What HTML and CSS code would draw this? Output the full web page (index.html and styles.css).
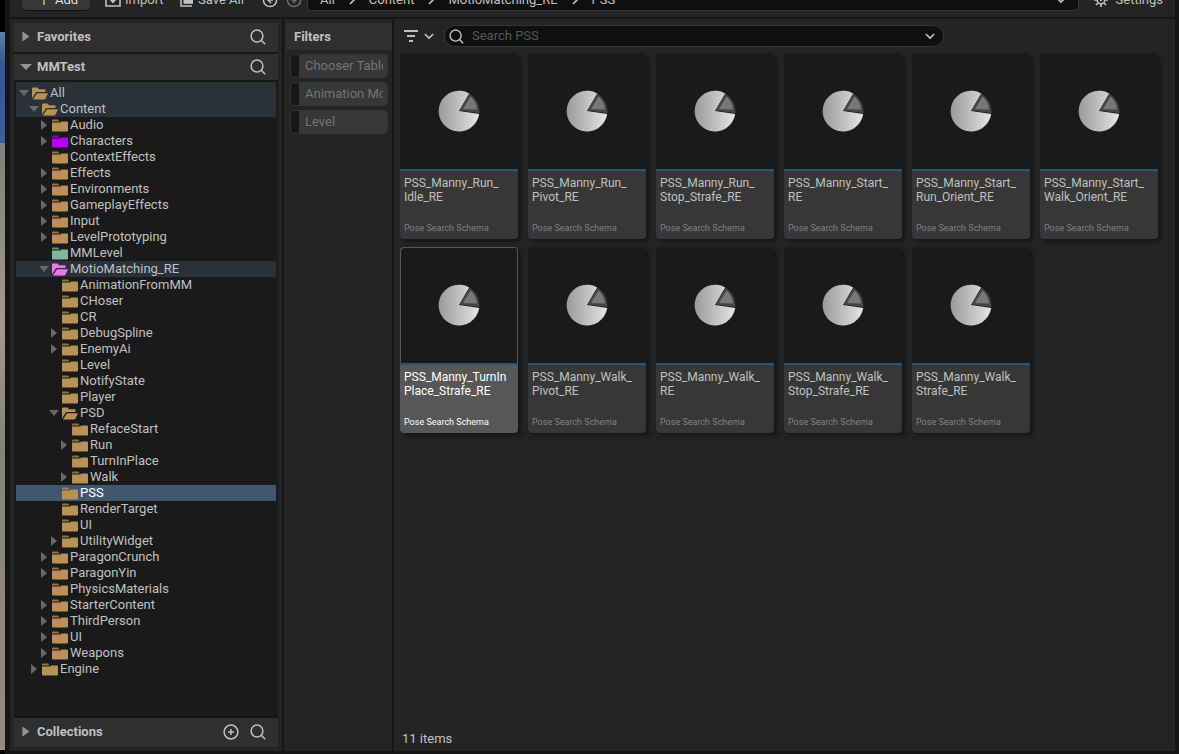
FILE: index.html
```html
<!DOCTYPE html>
<html lang="en">
<head>
<meta charset="utf-8">
<title>Content Browser</title>
<link rel="stylesheet" href="styles.css">
</head>
<body>
<svg class="defs" aria-hidden="true">
  <defs>
    <linearGradient id="pieFill" x1="0" y1="0" x2="1" y2="0"><stop offset="0" stop-color="#9a9a9a"/><stop offset="1" stop-color="#e6e6e6"/></linearGradient>
    <symbol id="folder" viewBox="0 0 16 13"><path d="M0 2.600V1.200Q0 .5 .8 .5H6l1.800 2.100z" opacity=".75"/><path d="M0 3.600H8.200L9.400 2.600H15Q16 2.600 16 3.600V11.500Q16 12.500 15 12.500H1Q0 12.500 0 11.500z"/></symbol>
    <symbol id="folder-open" viewBox="0 0 16 13"><path d="M0 11.500V1.500Q0 .5 1 .5H5.500L7 2.300H12.500Q13.500 2.300 13.500 3.300V5H5.200Q4 5 3.400 6z"/><path d="M1 12.500 4.600 6.800Q5 6.200 5.800 6.200H16L13.400 11.700Q13 12.500 12 12.500z"/></symbol>
    <symbol id="search" viewBox="0 0 16 16"><circle cx="7" cy="7" r="5.900" fill="none" stroke="currentColor" stroke-width="1.500"/><path d="M11.200 11.200 15.200 15.200" stroke="currentColor" stroke-width="1.600"/></symbol>
    <symbol id="right" viewBox="0 0 8 12"><path d="M2 2 6 6 2 10" fill="none" stroke="currentColor" stroke-width="1.700"/></symbol>
    <symbol id="down" viewBox="0 0 10 8"><path d="M.8 2 5 6 9.200 2" fill="none" stroke="currentColor" stroke-width="1.700"/></symbol>
    <symbol id="pie" viewBox="0 0 42 42"><path d="M21 21 31.200 3.400A20.400 20.400 0 1 0 41.200 24z" fill="url(#pieFill)"/><path d="M21.500 20.500 31.500 3.700A20.400 20.400 0 0 1 41.300 23.300z" fill="#454545"/><path d="M25 19 32.500 6.500A17.500 17.500 0 0 1 39 19.800z" fill="#777"/></symbol>
  </defs>
</svg>
<div class="app">
  <div class="scene"><div class="scene-sky"></div><div class="scene-wall"></div></div>
  <div class="window">
    <header class="toolbar">
      <button class="tool add"><svg width="10" height="14" viewBox="0 0 10 14"><path d="M5 0V12M0 5H10" stroke="#8bc24a" stroke-width="1.800"/></svg>Add</button>
      <button class="tool import"><svg width="16" height="14" viewBox="0 0 16 14"><path d="M4 1H1V13H15V1H12" fill="none" stroke="currentColor" stroke-width="1.600"/><path d="M4 6H12L8 10.500zM7 1H9V7H7z" fill="currentColor"/></svg>Import</button>
      <button class="tool save"><svg width="14" height="14" viewBox="0 0 14 14"><path d="M1 3V13H12" fill="none" stroke="currentColor" stroke-width="1.600"/><path d="M3.500 1H13V10.800H3.500z" fill="currentColor"/></svg>Save All</button>
      <button class="tool nav" aria-label="Back"><svg width="16" height="16" viewBox="0 0 16 16" fill="none" stroke="currentColor" stroke-width="1.500"><circle cx="8" cy="8" r="6.600"/><path d="M9 5 6 8 9 11M6 8H11"/></svg></button>
      <button class="tool nav dim" aria-label="Forward"><svg width="16" height="16" viewBox="0 0 16 16" fill="none" stroke="currentColor" stroke-width="1.500"><circle cx="8" cy="8" r="6.600"/><path d="M7 5 10 8 7 11M5 8H10"/></svg></button>
      <nav class="path" aria-label="Path">
        <a href="#">All</a><svg class="sep"><use href="#right"/></svg>
        <a href="#">Content</a><svg class="sep"><use href="#right"/></svg>
        <a href="#">MotioMatching_RE</a><svg class="sep"><use href="#right"/></svg>
        <a href="#">PSS</a><svg class="chev end"><use href="#down"/></svg>
      </nav>
      <button class="tool settings"><svg width="14" height="14" viewBox="0 0 14 14"><circle cx="7" cy="7" r="3.800" fill="none" stroke="currentColor" stroke-width="1.600"/><circle cx="7" cy="7" r="1.200" fill="currentColor"/><path d="M7 0V3M7 11V14M0 7H3M11 7H14M2 2 4 4M10 10 12 12M12 2 10 4M4 10 2 12" stroke="currentColor" stroke-width="1.700"/></svg>Settings</button>
    </header>
    <main class="main">
      <aside class="sources">
        <div class="section fav"><span class="tri"></span><h2>Favorites</h2><button class="icon" aria-label="Search favorites"><svg><use href="#search"/></svg></button></div>
        <div class="section project"><span class="tri open"></span><h2>MMTest</h2><button class="icon" aria-label="Search folders"><svg><use href="#search"/></svg></button></div>
        <ul class="tree" role="tree">
          <li role="treeitem" class="row d0 path-row first"><span class="tri open"></span><svg><use href="#folder-open"/></svg>All</li>
          <li role="treeitem" class="row d1 path-row"><span class="tri open"></span><svg><use href="#folder-open"/></svg>Content</li>
          <li role="treeitem" class="row d2"><span class="tri"></span><svg><use href="#folder"/></svg>Audio</li>
          <li role="treeitem" class="row d2 purple"><span class="tri"></span><svg><use href="#folder"/></svg>Characters</li>
          <li role="treeitem" class="row d2 leaf"><svg><use href="#folder"/></svg>ContextEffects</li>
          <li role="treeitem" class="row d2"><span class="tri"></span><svg><use href="#folder"/></svg>Effects</li>
          <li role="treeitem" class="row d2"><span class="tri"></span><svg><use href="#folder"/></svg>Environments</li>
          <li role="treeitem" class="row d2"><span class="tri"></span><svg><use href="#folder"/></svg>GameplayEffects</li>
          <li role="treeitem" class="row d2"><span class="tri"></span><svg><use href="#folder"/></svg>Input</li>
          <li role="treeitem" class="row d2"><span class="tri"></span><svg><use href="#folder"/></svg>LevelPrototyping</li>
          <li role="treeitem" class="row d2 leaf green"><svg><use href="#folder"/></svg>MMLevel</li>
          <li role="treeitem" class="row d2 path-row pink"><span class="tri open"></span><svg><use href="#folder-open"/></svg>MotioMatching_RE</li>
          <li role="treeitem" class="row d3 leaf"><svg><use href="#folder"/></svg>AnimationFromMM</li>
          <li role="treeitem" class="row d3 leaf"><svg><use href="#folder"/></svg>CHoser</li>
          <li role="treeitem" class="row d3 leaf"><svg><use href="#folder"/></svg>CR</li>
          <li role="treeitem" class="row d3"><span class="tri"></span><svg><use href="#folder"/></svg>DebugSpline</li>
          <li role="treeitem" class="row d3"><span class="tri"></span><svg><use href="#folder"/></svg>EnemyAi</li>
          <li role="treeitem" class="row d3 leaf"><svg><use href="#folder"/></svg>Level</li>
          <li role="treeitem" class="row d3 leaf"><svg><use href="#folder"/></svg>NotifyState</li>
          <li role="treeitem" class="row d3 leaf"><svg><use href="#folder"/></svg>Player</li>
          <li role="treeitem" class="row d3"><span class="tri open"></span><svg><use href="#folder-open"/></svg>PSD</li>
          <li role="treeitem" class="row d4 leaf"><svg><use href="#folder"/></svg>RefaceStart</li>
          <li role="treeitem" class="row d4"><span class="tri"></span><svg><use href="#folder"/></svg>Run</li>
          <li role="treeitem" class="row d4 leaf"><svg><use href="#folder"/></svg>TurnInPlace</li>
          <li role="treeitem" class="row d4"><span class="tri"></span><svg><use href="#folder"/></svg>Walk</li>
          <li role="treeitem" class="row d3 leaf selected" aria-selected="true"><svg><use href="#folder"/></svg>PSS</li>
          <li role="treeitem" class="row d3 leaf"><svg><use href="#folder"/></svg>RenderTarget</li>
          <li role="treeitem" class="row d3 leaf"><svg><use href="#folder"/></svg>UI</li>
          <li role="treeitem" class="row d3"><span class="tri"></span><svg><use href="#folder"/></svg>UtilityWidget</li>
          <li role="treeitem" class="row d2"><span class="tri"></span><svg><use href="#folder"/></svg>ParagonCrunch</li>
          <li role="treeitem" class="row d2"><span class="tri"></span><svg><use href="#folder"/></svg>ParagonYin</li>
          <li role="treeitem" class="row d2 leaf"><svg><use href="#folder"/></svg>PhysicsMaterials</li>
          <li role="treeitem" class="row d2"><span class="tri"></span><svg><use href="#folder"/></svg>StarterContent</li>
          <li role="treeitem" class="row d2"><span class="tri"></span><svg><use href="#folder"/></svg>ThirdPerson</li>
          <li role="treeitem" class="row d2"><span class="tri"></span><svg><use href="#folder"/></svg>UI</li>
          <li role="treeitem" class="row d2"><span class="tri"></span><svg><use href="#folder"/></svg>Weapons</li>
          <li role="treeitem" class="row d1"><span class="tri"></span><svg><use href="#folder"/></svg>Engine</li>
        </ul>
        <div class="section collections"><span class="tri"></span><h2>Collections</h2><button class="icon" aria-label="Add collection"><svg viewBox="0 0 16 16" fill="none" stroke="currentColor" stroke-width="1.500"><circle cx="8" cy="8" r="6.900"/><path d="M8 5V11M5 8H11"/></svg></button><button class="icon" aria-label="Search collections"><svg><use href="#search"/></svg></button></div>
      </aside>
      <aside class="filters">
        <h2>Filters</h2>
        <button class="chip"><span>Chooser Table</span></button>
        <button class="chip"><span>Animation Montage</span></button>
        <button class="chip"><span>Level</span></button>
      </aside>
      <section class="assets">
        <div class="searchbar">
          <button class="filter-btn" aria-label="Filter"><svg width="16" height="14" viewBox="0 0 16 14"><path d="M1 2H15M4 7H12M6 12H10" stroke="currentColor" stroke-width="1.800"/></svg><svg class="chev"><use href="#down"/></svg></button>
          <label class="search"><svg class="glass"><use href="#search"/></svg><input type="text" placeholder="Search PSS" aria-label="Search PSS"><svg class="chev"><use href="#down"/></svg></label>
        </div>
        <ul class="grid">
          <li class="card"><div class="thumb"><svg><use href="#pie"/></svg></div><div class="info"><h3>PSS_Manny_Run_<br>Idle_RE</h3><p>Pose Search Schema</p></div></li>
          <li class="card"><div class="thumb"><svg><use href="#pie"/></svg></div><div class="info"><h3>PSS_Manny_Run_<br>Pivot_RE</h3><p>Pose Search Schema</p></div></li>
          <li class="card"><div class="thumb"><svg><use href="#pie"/></svg></div><div class="info"><h3>PSS_Manny_Run_<br>Stop_Strafe_RE</h3><p>Pose Search Schema</p></div></li>
          <li class="card"><div class="thumb"><svg><use href="#pie"/></svg></div><div class="info"><h3>PSS_Manny_Start_<br>RE</h3><p>Pose Search Schema</p></div></li>
          <li class="card"><div class="thumb"><svg><use href="#pie"/></svg></div><div class="info"><h3>PSS_Manny_Start_<br>Run_Orient_RE</h3><p>Pose Search Schema</p></div></li>
          <li class="card"><div class="thumb"><svg><use href="#pie"/></svg></div><div class="info"><h3>PSS_Manny_Start_<br>Walk_Orient_RE</h3><p>Pose Search Schema</p></div></li>
          <li class="card hover"><div class="thumb"><svg><use href="#pie"/></svg></div><div class="info"><h3>PSS_Manny_TurnIn<br>Place_Strafe_RE</h3><p>Pose Search Schema</p></div></li>
          <li class="card"><div class="thumb"><svg><use href="#pie"/></svg></div><div class="info"><h3>PSS_Manny_Walk_<br>Pivot_RE</h3><p>Pose Search Schema</p></div></li>
          <li class="card"><div class="thumb"><svg><use href="#pie"/></svg></div><div class="info"><h3>PSS_Manny_Walk_<br>RE</h3><p>Pose Search Schema</p></div></li>
          <li class="card"><div class="thumb"><svg><use href="#pie"/></svg></div><div class="info"><h3>PSS_Manny_Walk_<br>Stop_Strafe_RE</h3><p>Pose Search Schema</p></div></li>
          <li class="card"><div class="thumb"><svg><use href="#pie"/></svg></div><div class="info"><h3>PSS_Manny_Walk_<br>Strafe_RE</h3><p>Pose Search Schema</p></div></li>
        </ul>
        <footer class="status">11 items</footer>
      </section>
    </main>
  </div>
</div>
</body>
</html>
```
FILE: styles.css
```css
* { box-sizing: border-box; }
body { margin: 0; background: #050505; color: #c0c0c0; font: 13px/16px Roboto, "Liberation Sans", sans-serif; }
h2, h3, p, ul { margin: 0; padding: 0; font-size: inherit; font-weight: inherit; }
ul { list-style: none; }
button, input { border: 0; background: none; padding: 0; color: inherit; font: inherit; }
a { color: inherit; text-decoration: none; }
svg { flex: none; }
.defs { position: absolute; width: 0; height: 0; }

.app { display: flex; height: 100vh; overflow: hidden; }
.scene { flex: none; width: 5px; padding: 32px 0 4px; display: flex; flex-direction: column; background: #000; }
.scene-sky { flex: none; height: 111px; background: linear-gradient(#5d7da8, #34588c 30%, #3a5f94); }
.scene-wall { flex: 1; background: linear-gradient(#837e79, #a09992 30%, #87817c 50%, #928b85); }
.window { flex: 1; min-width: 0; display: flex; flex-direction: column; padding: 0 4px 3px 5px; background: #151515; }

/* The toolbar is scrolled partly out of view at the top edge. */
.toolbar { flex: none; height: 17px; overflow: hidden; display: flex; align-items: flex-end; padding: 0 12px 6px; background: #242424; }
.tool { flex: none; height: 22px; display: flex; align-items: center; gap: 4px; }
.add { width: 68px; padding-left: 17px; gap: 6px; border-radius: 4px; background: #373737; border-bottom: 1px solid #111; color: #e0e0e0; }
.import { margin-left: 15px; width: 75px; }
.save { width: 82px; }
.nav { width: 24px; }
.dim { width: 21px; color: #707070; }
.path { flex: 1; display: flex; align-items: center; height: 23px; padding: 0 12px; background: #0f0f0f; border: 1px solid #353535; border-radius: 4px; }
.sep { width: 8px; height: 12px; margin: 0 13px; }
.chev { width: 10px; height: 8px; }
.end { margin-left: auto; }
.settings { margin-left: 15px; gap: 8px; }

.main { flex: 1; min-height: 0; display: flex; gap: 2px; padding-top: 2px; }
.sources { flex: none; width: 272px; padding: 4px; display: flex; flex-direction: column; background: #242424; }
.section { flex: none; display: flex; align-items: center; gap: 6px; height: 26px; padding: 0 12px 0 6px; background: #2f2f2f; font-weight: 700; }
.section h2 { flex: 1; margin-left: 4px; }
.fav, .collections { height: 29px; padding-bottom: 2px; }
.project { margin-top: 2px; box-shadow: 0 -2px #171717; }
.icon { width: 16px; height: 16px; margin-left: 5px; }
.icon svg { display: block; width: 16px; height: 16px; }
.tri { flex: none; width: 10px; height: 10px; background: #686868; clip-path: polygon(20% 0, 80% 50%, 20% 100%); }
.tri.open { clip-path: polygon(0 20%, 100% 20%, 50% 80%); }
.section .tri { width: 12px; background: #949494; margin-right: -5px; }
.tree { flex: 1; min-height: 0; overflow: hidden; padding: 0 2px; background: #1a1a1a; border: solid #161616; border-width: 2px 0; }
.row { display: flex; align-items: center; height: 16px; color: #c0c0c0; }
.row svg { width: 16px; height: 13px; margin: 1px 2px 0 3px; fill: #b89157; }
.leaf svg { margin-left: 13px; }
.first { height: 19px; padding-top: 3px; }
.d0 { padding-left: 3px; }
.d1 { padding-left: 13px; }
.d2 { padding-left: 23px; }
.d3 { padding-left: 33px; }
.d4 { padding-left: 43px; }
.path-row { background: #2b3139; }
.selected { background: #41566f; color: #fff; }
.purple svg { fill: #b800f5; }
.green svg { fill: #80b69d; }
.pink svg { fill: #e879e8; }

.filters { flex: none; width: 108px; padding: 4px 0 0 2px; background: #242424; }
.filters h2 { height: 27px; margin-bottom: 4px; padding-left: 8px; line-height: 27px; font-weight: 700; background: #2f2f2f; }
.chip { display: block; width: 98px; height: 24px; margin: 0 0 4px 4px; padding: 0 4px 0 6px; text-align: left; color: #747474; border: 1px solid #333; border-radius: 4px; background: linear-gradient(90deg, #171717 8px, #373737 8px); }
.chip span { display: block; margin-left: 8px; overflow: hidden; white-space: nowrap; }

.assets { flex: 1; min-width: 0; display: flex; flex-direction: column; padding: 6px 6px 4px; background: #242424; }
.searchbar { display: flex; align-items: center; height: 22px; margin-bottom: 6px; }
.filter-btn { display: flex; align-items: center; gap: 5px; width: 44px; padding-left: 3px; }
.search { display: flex; align-items: center; gap: 8px; width: 500px; height: 22px; padding: 0 8px 0 4px; background: #0f0f0f; border: 1px solid #353535; border-radius: 11px; }
.search input { flex: 1; min-width: 0; outline: 0; }
.search input::placeholder { color: #575757; opacity: 1; }
.glass { width: 15px; height: 15px; }
.grid { flex: 1; display: grid; grid-template-columns: repeat(auto-fill, 118px); align-content: start; gap: 8px 10px; }
.card { display: flex; flex-direction: column; height: 186px; border-radius: 4px; overflow: hidden; background: #373737; box-shadow: 3px 3px 4px #161616; }
.thumb { height: 116px; display: flex; align-items: center; justify-content: center; background: #1a1a1a; }
.thumb svg { width: 42px; height: 42px; }
.info { flex: 1; display: flex; flex-direction: column; justify-content: space-between; padding: 5px 4px; border-top: 2px solid #2a5668; }
.info h3 { font-size: 12px; line-height: 14px; white-space: nowrap; }
.info p { font-size: 9px; line-height: 12px; color: #808080; }
.hover { background: #575757; }
.hover .thumb { border-radius: 4px 4px 0 0; box-shadow: inset 1px 1px #575757, inset -1px 0 #575757; }
.hover h3, .hover p { color: #fff; }
.status { padding: 0 2px; }
```
